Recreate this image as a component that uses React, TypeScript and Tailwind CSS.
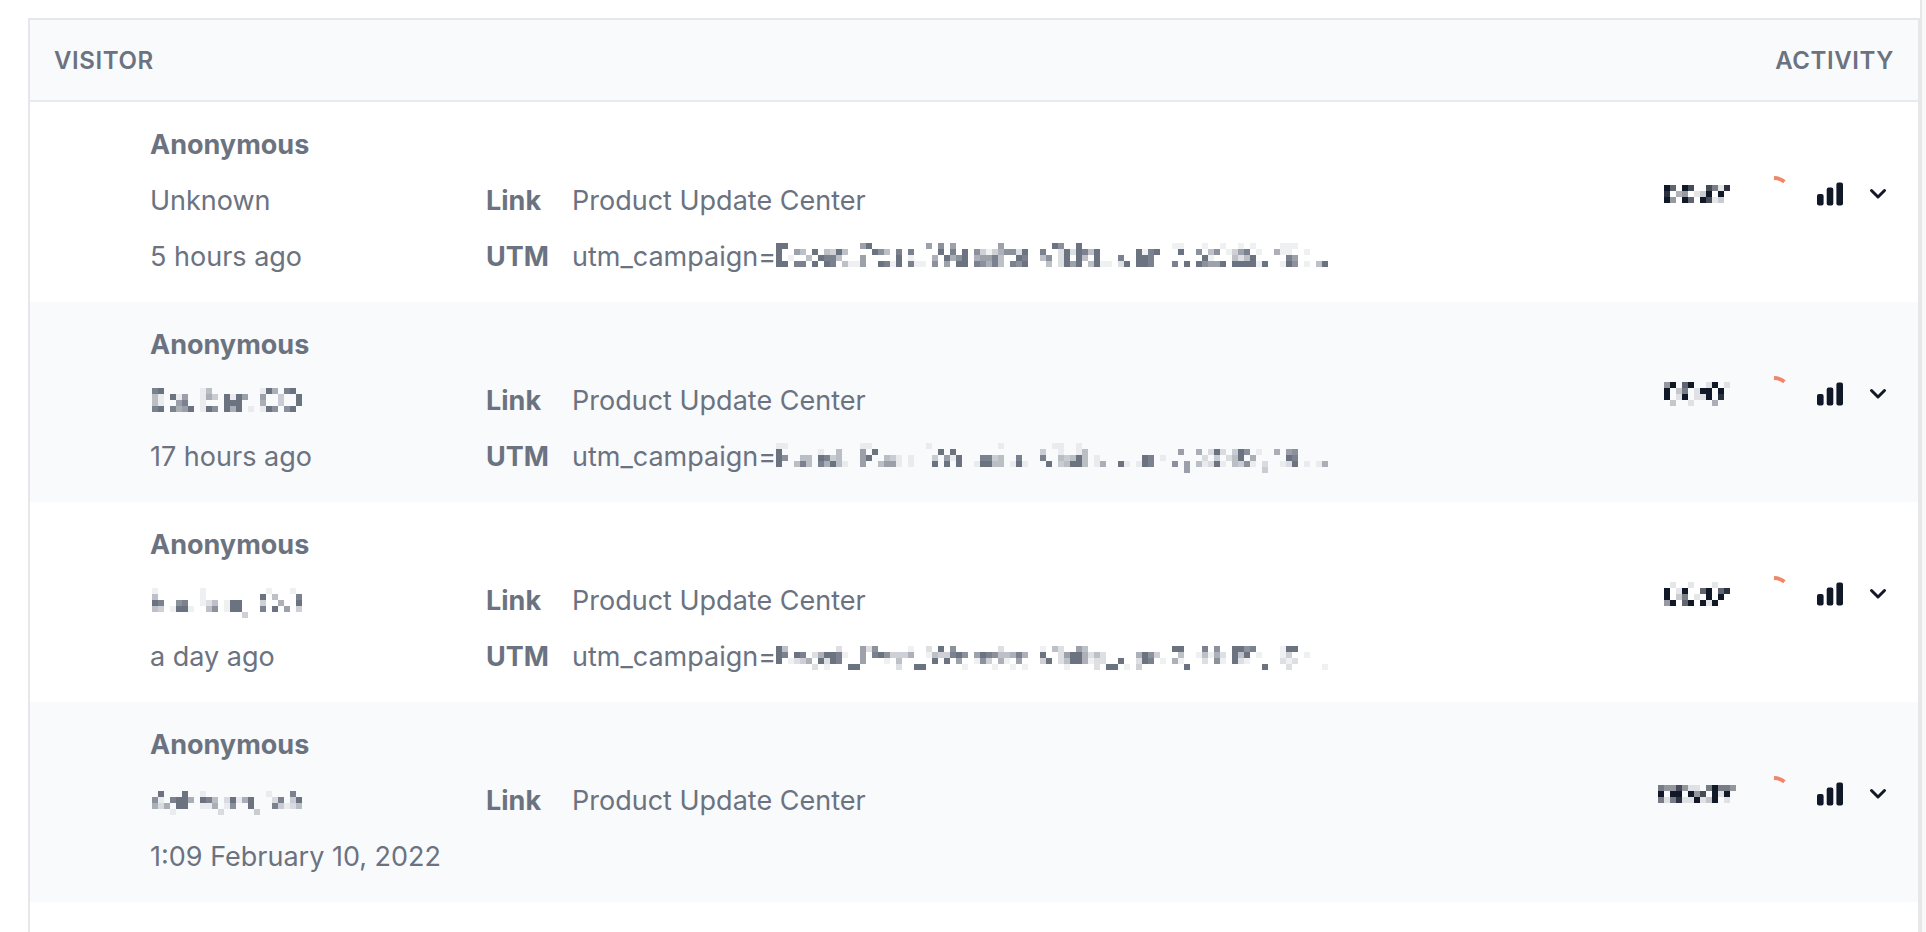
type MosaicProps = {
  rows: string[];
  className?: string;
};

type Visitor = {
  name: string;
  location?: string;
  locationMask?: string[];
  time: string;
  link: string;
  utmMask?: string[];
  countMask: string[];
};

const CELL = 6;

// Each digit is the darkness of one cell, a dot is an empty cell
const Mosaic = ({ rows, className = "" }: MosaicProps) => {
  const columns = Math.max(...rows.map((row) => row.length));
  return (
    <svg
      role="img"
      aria-label="Hidden"
      className={`shrink-0 ${className}`}
      width={columns * CELL}
      height={rows.length * CELL}
      fill="currentColor"
      shapeRendering="crispEdges"
    >
      {rows.map((row, y) =>
        row.split("").map((level, x) => {
          if (level === ".") return null;
          return (
            <rect
              key={`${x}_${y}`}
              x={x * CELL}
              y={y * CELL}
              width={CELL}
              height={CELL}
              fillOpacity={Number(level) / 9}
            />
          );
        })
      )}
    </svg>
  );
};

const visitors: Visitor[] = [
  {
    name: "Anonymous",
    location: "Unknown",
    time: "5 hours ago",
    link: "Product Update Center",
    utmMask: [
      "99............69.........6.7.6.......6........97..9...............11...1..1..1.1....111.....",
      "9..64.9.4394....974.8.8....9.8.9.731357729..8..2929849......9189...9..7.47.1368.1..511..1...",
      "9.1..4.9884...6.....9.1...5.9579.56684..98..47.29.94.9...8..998........91...4249.....86.....",
      "99.88.9.98.4116..9819.811.7.6.99.87584.879...4.2969.4911.29.998...8.9.97669.999919..197.1.49",
      "",
    ],
    countMask: ["96.97..7518", "8.34.129.9.", "94.96.9712."],
  },
  {
    name: "Anonymous",
    locationMask: [
      "89......14........195.89.",
      "41.916..153.9196..6..3..9",
      "41..68..1...999...5..3..9",
      "89.8569.197.959.1.197.79.",
      "",
    ],
    time: "17 hours ago",
    link: "Product Update Center",
    utmMask: [
      "11............11.........1...........1........11..1.........................................",
      "9......1..4...6.9..........9.9..............3..1..14...............6..5.292.397.1..5.67.....",
      "97..44.9834...69..431.1...3.619...8834..8...8..43494.1.......98.1......2.3.249.5.....98.....",
      "9..484.85941..6..4661.1...9.9.9..19944.191...9.34994.15..91.198...7.6.41291.4371.2..129.1.15",
      "....................................................................6............3..........",
    ],
    countMask: ["49.69..19.1", "9.25.199.9.", "9.19.119.8.", ".2..1...3.."],
  },
  {
    name: "Anonymous",
    locationMask: [
      "1.......1..........1...1.",
      "4.......1.........9.4...8",
      "98..78..124.199...3..5..9",
      "43.1991..47.199...8.9.6.3",
      "...............3.........",
    ],
    time: "a day ago",
    link: "Product Update Center",
    utmMask: [
      "94........2...627.....1..2.9.7.......2......1.42..64..............99...8.7..9978....199.....",
      "98.98.259981..6.8973335..1433897.698744585..9..26995242.....5973...4..14152.949.1...13..1...",
      "9.1235.9298...6...1.4.....9.9.6..173.51.6...39.24995122..9..298.1.51...2.71.921.....212.....",
      "......2.1...99......2..99......1....1..1.1......1....2.99.1.3.......9............9...2.....1",
    ],
    countMask: [".1..1...1..", "9.19..69.68", "9.25.1.9.9.", "49.69.919.."],
  },
  {
    name: "Anonymous",
    locationMask: [
      ".9...9..1..........1...8.",
      "71.8995.984.29159...28.39",
      "525.99..115.17..9...83124",
      "...1.......2.....3.......",
    ],
    time: "1:09 February 10, 2022",
    link: "Product Update Center",
    countMask: ["5447411.59554", "9.99.947.919.", "5158119129.1."],
  },
];

const SpinnerIcon = () => (
  <svg width="40" height="40" viewBox="0 0 40 40" fill="none" aria-hidden="true">
    <path
      d="M20 4A16 16 0 0 1 30.4 7.8"
      stroke="#f0876a"
      strokeWidth="4"
    />
  </svg>
);

const BarsIcon = () => (
  <svg width="26" height="24" viewBox="0 0 26 24" fill="currentColor">
    <rect x="0" y="12" width="6.6" height="11.4" rx="2" />
    <rect x="9.7" y="5.4" width="6.6" height="18" rx="2" />
    <rect x="19.4" y="0.6" width="6.6" height="22.8" rx="2" />
  </svg>
);

const ChevronIcon = () => (
  <svg width="18" height="12" viewBox="0 0 18 12" fill="none">
    <path
      d="M2.5 2.5L9 9L15.5 2.5"
      stroke="currentColor"
      strokeWidth="3"
      strokeLinecap="round"
      strokeLinejoin="round"
    />
  </svg>
);

const VisitorRow = ({ visitor }: { visitor: Visitor }) => {
  return (
    <tr className="align-top even:bg-[#f9fafc]">
      <td className="w-[456px] pt-[15px] pb-[17px] pl-[120px]">
        <div className="font-bold">{visitor.name}</div>
        <div className="flex h-14 items-center">
          {visitor.location}
          {visitor.locationMask && (
            <Mosaic rows={visitor.locationMask} className="mt-1 ml-0.5" />
          )}
        </div>
        <div>{visitor.time}</div>
      </td>
      <td className="pt-[71px] pb-[17px]">
        <div className="flex">
          <span className="w-[86px] font-bold">Link</span>
          <span>{visitor.link}</span>
        </div>
        {visitor.utmMask && (
          <div className="flex items-center">
            <span className="w-[86px] font-bold">UTM</span>
            <span className="w-[204px]">utm_campaign=</span>
            <Mosaic rows={visitor.utmMask} className="mt-0.5" />
          </div>
        )}
      </td>
      <td className="pr-6 pb-4 align-middle text-[#111827]">
        <div className="flex items-center justify-end">
          <div className="mr-[17px] flex w-20 justify-center">
            <Mosaic rows={visitor.countMask} />
          </div>
          <SpinnerIcon />
          <button
            type="button"
            aria-label="Show statistics"
            className="ml-5 flex size-8 items-center justify-center"
          >
            <BarsIcon />
          </button>
          <button
            type="button"
            aria-label="Show details"
            className="ml-4 flex size-8 items-center justify-center"
          >
            <ChevronIcon />
          </button>
        </div>
      </td>
    </tr>
  );
};

const App = () => {
  return (
    <div className="min-h-screen bg-[#f8f8f9] pr-1 font-['Inter',sans-serif] text-[27px] leading-14 text-[#6b7280]">
      <main className="flex min-h-screen flex-col border-r-2 border-[#e5e7eb] bg-white pt-[18px] pl-7">
        <div className="flex-1 border-x-2 border-t-2 border-[#e5e7eb]">
          <table className="w-full border-collapse">
            <thead>
              <tr className="h-[81px] border-b-2 border-[#e7ebef] bg-[#f9fafc] text-2xl tracking-wide">
                <th colSpan={2} className="pt-0.5 pl-6 text-left font-semibold">
                  VISITOR
                </th>
                <th className="pt-0.5 pr-6 text-right font-semibold">
                  ACTIVITY
                </th>
              </tr>
            </thead>
            <tbody>
              {visitors.map((visitor) => (
                <VisitorRow key={visitor.time} visitor={visitor} />
              ))}
            </tbody>
          </table>
        </div>
      </main>
    </div>
  );
};

export default App;
